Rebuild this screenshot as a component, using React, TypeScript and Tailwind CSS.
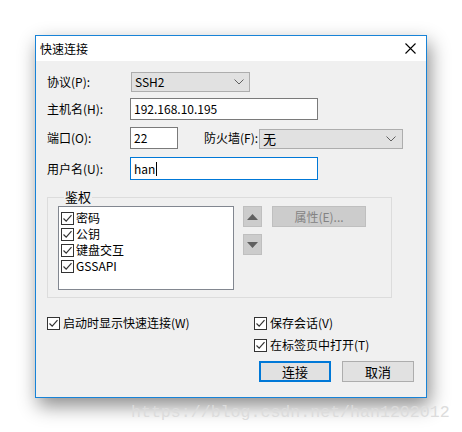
const authMethods = ["密码", "公钥", "键盘交互", "GSSAPI"];

function Check({ className = "" }: { className?: string }) {
  return (
    <span
      className={`flex h-[13px] w-[13px] shrink-0 items-center justify-center border border-[#333333] bg-white ${className}`}
    >
      <svg width="11" height="11" viewBox="0 0 11 11">
        <path d="M1.5 5.5 L4.2 8.2 L9.5 2.2" fill="none" stroke="#333333" strokeWidth="1.2" />
      </svg>
    </span>
  );
}

function Chevron() {
  return (
    <svg width="10" height="6" viewBox="0 0 10 6">
      <path d="M0.5 0.5 L5 5 L9.5 0.5" fill="none" stroke="#606060" strokeWidth="1" />
    </svg>
  );
}

function Label({ children }: { children: React.ReactNode }) {
  return <span className="w-[83px] shrink-0 leading-4">{children}</span>;
}

export default function App() {
  return (
    <div
      className="min-h-[432px] bg-white pl-[35px] pt-[35px] text-[12px] text-black"
      style={{ fontFamily: '"Noto Sans CJK SC", "Noto Sans", sans-serif' }}
    >
      {/* 对话框 */}
      <div className="flex h-[363px] w-[392px] flex-col border border-[#1883d7] bg-[#f0f0f0] shadow-[3px_8px_18px_rgba(0,0,0,0.45)]">
        <div className="flex h-[25px] shrink-0 items-center justify-between bg-white pl-[4px] pr-[10px]">
          <span className="leading-4">快速连接</span>
          <svg width="11" height="11" viewBox="0 0 11 11">
            <path d="M0.5 0.5 L10.5 10.5 M10.5 0.5 L0.5 10.5" stroke="#000" strokeWidth="1.1" />
          </svg>
        </div>

        <div className="flex flex-col pl-[11px]">
          <div className="mt-[11px] flex h-[20px] items-center">
            <Label>协议(P):</Label>
            <div className="ml-[1px] flex h-[20px] w-[119px] items-center justify-between border border-[#adadad] bg-[#e1e1e1] pl-[3px] pr-[5px]">
              <span>SSH2</span>
              <Chevron />
            </div>
          </div>

          <div className="mt-[6px] flex h-[22px] items-center">
            <Label>主机名(H):</Label>
            <div className="flex h-[22px] w-[188px] items-center border border-[#7a7a7a] bg-white pl-[3px]">
              192.168.10.195
            </div>
          </div>

          <div className="mt-[7px] flex h-[22px] items-center">
            <Label>端口(O):</Label>
            <div className="flex h-[22px] w-[48px] items-center border border-[#7a7a7a] bg-white pl-[3px]">
              22
            </div>
            <span className="ml-[26px] w-[55px] leading-4">防火墙(F):</span>
            <div className="mt-[2px] flex h-[20px] w-[144px] items-center justify-between border border-[#adadad] bg-[#e1e1e1] pl-[3px] pr-[6px]">
              <span className="text-[13px]">无</span>
              <Chevron />
            </div>
          </div>

          <div className="mt-[8px] flex h-[23px] items-center">
            <Label>用户名(U):</Label>
            <div className="flex h-[23px] w-[188px] items-center border border-[#0078d7] bg-white pl-[3px]">
              han
              <span className="ml-[1px] h-[14px] w-[1px] bg-black" />
            </div>
          </div>

          <fieldset className="mt-[9px] h-[109px] w-[345px] border border-[#dcdcdc] pl-[10px]">
            <legend className="ml-[6px] px-[1px] text-[13px] leading-4">鉴权</legend>
            <div className="mt-[1px] flex items-start">
              <div className="flex h-[84px] w-[176px] flex-col border border-[#828790] bg-white pl-[2px] pt-[3px]">
                {authMethods.map((m) => (
                  <div key={m} className="flex h-[16px] items-center gap-[2px]">
                    <Check />
                    <span className="leading-4">{m}</span>
                  </div>
                ))}
              </div>
              <div className="ml-[9px] flex flex-col gap-[7px]">
                <div className="flex h-[21px] w-[19px] items-center justify-center border border-[#bfbfbf] bg-[#cccccc]">
                  <svg width="11" height="6" viewBox="0 0 11 6">
                    <path d="M5.5 0 L11 6 L0 6 Z" fill="#606060" />
                  </svg>
                </div>
                <div className="flex h-[21px] w-[19px] items-center justify-center border border-[#bfbfbf] bg-[#cccccc]">
                  <svg width="11" height="6" viewBox="0 0 11 6">
                    <path d="M0 0 L11 0 L5.5 6 Z" fill="#606060" />
                  </svg>
                </div>
              </div>
              <div className="ml-[10px] flex h-[21px] w-[94px] items-center justify-center border border-[#bfbfbf] bg-[#cccccc] text-[#838383]">
                属性(E)...
              </div>
            </div>
          </fieldset>

          <div className="mt-[17px] flex items-start">
            <div className="flex h-[16px] w-[207px] items-center gap-[3px]">
              <Check />
              <span className="leading-4">启动时显示快速连接(W)</span>
            </div>
            <div className="flex flex-col gap-[6px]">
              <div className="flex h-[16px] items-center gap-[3px]">
                <Check />
                <span className="leading-4">保存会话(V)</span>
              </div>
              <div className="flex h-[16px] items-center gap-[3px]">
                <Check />
                <span className="leading-4">在标签页中打开(T)</span>
              </div>
            </div>
          </div>

          <div className="mt-[8px] flex justify-end gap-[11px] pr-[12px]">
            <div className="flex h-[21px] w-[72px] items-center justify-center border-2 border-[#0078d7] bg-[#e1e1e1] text-[13px]">
              连接
            </div>
            <div className="flex h-[21px] w-[72px] items-center justify-center border border-[#adadad] bg-[#e1e1e1] text-[13px]">
              取消
            </div>
          </div>
        </div>
      </div>

      <div
        className="ml-[96px] mt-[5px] text-[16.6px] leading-5 text-[#dcdcdc]"
        style={{ fontFamily: '"Liberation Mono", monospace' }}
      >
        https://blog.csdn.net/han1202012
      </div>
    </div>
  );
}
